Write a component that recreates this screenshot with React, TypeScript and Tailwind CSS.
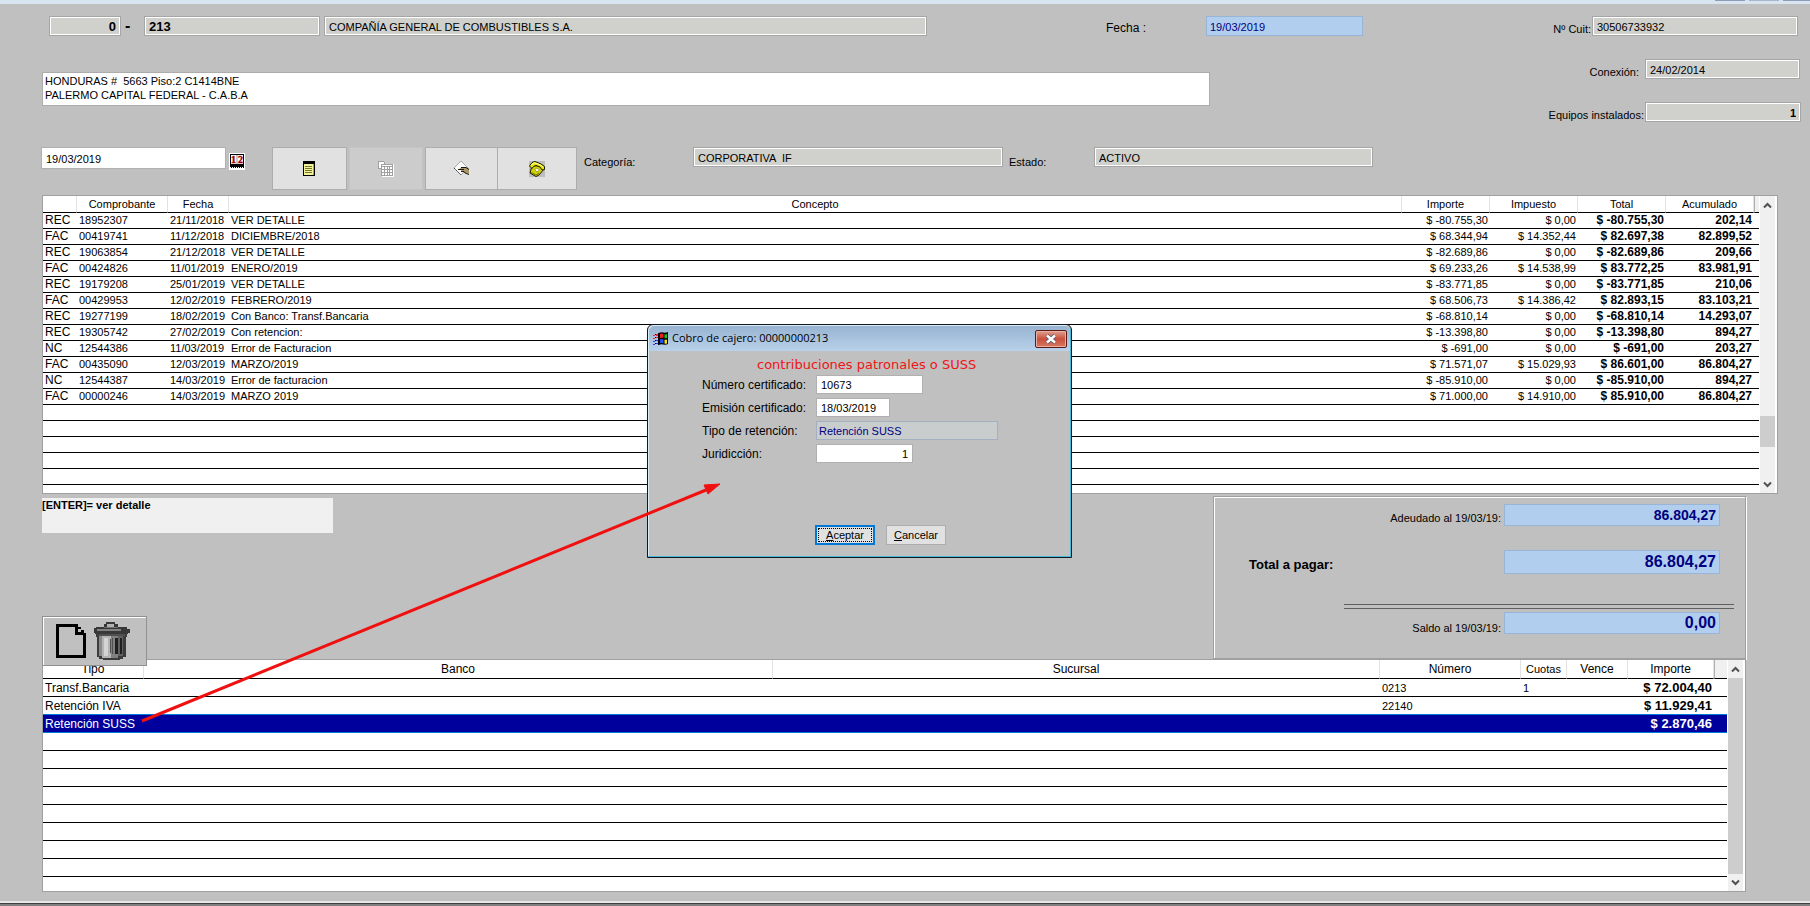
import type { InputHTMLAttributes, ReactNode } from 'react';
import clsx from 'clsx';

const FIELD_STYLES = {
  readonly: 'h-5 border border-[#a6a6a6] bg-[#d0d0cc] px-1 pt-px shadow-[inset_0_0_0_1px_#fff] outline-none',
  highlight: 'border border-[#98b4d6] bg-[#b2ceee] px-[3px] text-[#000080] outline-none',
  editable: 'border border-[#b0b0b0] bg-white px-1 pt-px outline-none',
};

const MOVEMENTS = [
  ['REC', '18952307', '21/11/2018', 'VER DETALLE', '$ -80.755,30', '$ 0,00', '$ -80.755,30', '202,14'],
  ['FAC', '00419741', '11/12/2018', 'DICIEMBRE/2018', '$ 68.344,94', '$ 14.352,44', '$ 82.697,38', '82.899,52'],
  ['REC', '19063854', '21/12/2018', 'VER DETALLE', '$ -82.689,86', '$ 0,00', '$ -82.689,86', '209,66'],
  ['FAC', '00424826', '11/01/2019', 'ENERO/2019', '$ 69.233,26', '$ 14.538,99', '$ 83.772,25', '83.981,91'],
  ['REC', '19179208', '25/01/2019', 'VER DETALLE', '$ -83.771,85', '$ 0,00', '$ -83.771,85', '210,06'],
  ['FAC', '00429953', '12/02/2019', 'FEBRERO/2019', '$ 68.506,73', '$ 14.386,42', '$ 82.893,15', '83.103,21'],
  ['REC', '19277199', '18/02/2019', 'Con Banco: Transf.Bancaria', '$ -68.810,14', '$ 0,00', '$ -68.810,14', '14.293,07'],
  ['REC', '19305742', '27/02/2019', 'Con retencion:', '$ -13.398,80', '$ 0,00', '$ -13.398,80', '894,27'],
  ['NC', '12544386', '11/03/2019', 'Error de Facturacion', '$ -691,00', '$ 0,00', '$ -691,00', '203,27'],
  ['FAC', '00435090', '12/03/2019', 'MARZO/2019', '$ 71.571,07', '$ 15.029,93', '$ 86.601,00', '86.804,27'],
  ['NC', '12544387', '14/03/2019', 'Error de facturacion', '$ -85.910,00', '$ 0,00', '$ -85.910,00', '894,27'],
  ['FAC', '00000246', '14/03/2019', 'MARZO 2019', '$ 71.000,00', '$ 14.910,00', '$ 85.910,00', '86.804,27'],
];

const PAYMENTS = [
  { tipo: 'Transf.Bancaria', numero: '0213', cuotas: '1', importe: '$ 72.004,40' },
  { tipo: 'Retención IVA', numero: '22140', cuotas: '', importe: '$ 11.929,41' },
  { tipo: 'Retención SUSS', numero: '', cuotas: '', importe: '$ 2.870,46', selected: true },
];

const EMPTY_MOVEMENTS = [0, 1, 2, 3, 4];
const EMPTY_PAYMENTS = [0, 1, 2, 3, 4, 5, 6, 7];

type FieldProps = InputHTMLAttributes<HTMLInputElement> & { variant: keyof typeof FIELD_STYLES };

function Field({ variant, className, ...props }: FieldProps) {
  return (
    <input
      type="text"
      readOnly={variant !== 'editable'}
      className={clsx(FIELD_STYLES[variant], className)}
      {...props}
    />
  );
}

function Chevron({ down = false }: { down?: boolean }) {
  return (
    <svg width="9" height="7" viewBox="0 0 9 7" className={down ? 'rotate-180' : ''} fill="none">
      <path d="M1 5.5 4.5 2 8 5.5" stroke="#505050" strokeWidth="2" />
    </svg>
  );
}

function ScrollBar({ children }: { children: ReactNode }) {
  return (
    <div className="flex w-[18px] shrink-0 flex-col border-r-2 border-l border-white bg-[#f0f0f0]">
      <button type="button" aria-label="Subir" className="flex h-[18px] items-center justify-center">
        <Chevron />
      </button>
      <div className="flex flex-1 flex-col">{children}</div>
      <button type="button" aria-label="Bajar" className="flex h-[17px] items-center justify-center">
        <Chevron down />
      </button>
    </div>
  );
}

function CalendarIcon() {
  return (
    <svg width="16" height="17" viewBox="0 0 16 17">
      <path d="M0 0h16v17H0z" fill="#fff" />
      <path d="M1 1h14v14H1z" fill="#000" />
      <path d="M2 2h5v9H2zM9 2h5v9H9z" fill="#fff" />
      <path d="M7 2h2v9H7z" fill="#c8c8c8" />
      <path d="M1 14.500h14" stroke="#fff" strokeWidth="1" strokeDasharray="1 1" />
      <text x="2" y="10" fontSize="10" fontWeight="700" fontFamily="Liberation Serif, serif" fill="#a00000" stroke="#a00000" strokeWidth="0.400">1</text>
      <text x="9" y="10" fontSize="10" fontWeight="700" fontFamily="Liberation Serif, serif" fill="#a00000" stroke="#a00000" strokeWidth="0.400">2</text>
    </svg>
  );
}

function NotepadIcon() {
  return (
    <svg width="12" height="15" viewBox="0 0 12 15" shapeRendering="crispEdges">
      <path d="M0 0h12v15H0z" fill="#000" />
      <path d="M1 3h9v11H1z" fill="#f4f49c" />
      <path d="M2 5h7v1H2zM2 7h7v1H2zM2 9h7v1H2zM2 11h7v1H2z" fill="#74742c" />
      <path d="M10 3h1v11h-1z" fill="#40c8c0" />
    </svg>
  );
}

function SheetsIcon() {
  return (
    <svg width="16" height="16" viewBox="0 0 16 16" shapeRendering="crispEdges">
      <path d="M1 1h6v2h8v13H4V8H1z" fill="#fff" />
      <path d="M0 0h6v1H1v6h2v1H0zM6 1h1v2H6zM3 3h12v12H3z" fill="#a0a0a0" />
      <path d="M4 4h10v1H4zM4 6h2v2H4zM7 6h2v2H7zM10 6h1v2h-1zM12 6h2v2h-2zM4 9h2v2H4zM7 9h2v2H7zM10 9h1v2h-1zM12 9h2v2h-2zM4 12h2v2H4zM7 12h2v2H7zM10 12h1v2h-1zM12 12h2v2h-2zM2 2h3v1H2z" fill="#fff" />
      <path d="M15 3h1v13H4v-1h11z" fill="#fff" />
    </svg>
  );
}

function WriteIcon() {
  return (
    <svg width="17" height="17" viewBox="0 0 17 17">
      <path d="M8 1 15 8 8 15 1 8z" fill="#fafafa" stroke="#a8a8a8" strokeWidth="1" />
      <path d="M1 8 8 15" stroke="#404040" strokeWidth="1" strokeDasharray="2 1" />
      <path d="M6 9 9 7h4l3 2v5l-3-1-2 0-2-2z" fill="#a89868" />
      <path d="M5 9.500h6M8 7.500h5l3 2M8 11.500h3l1 1.500 4 1.500" fill="none" stroke="#201810" strokeWidth="1" />
    </svg>
  );
}

function PhoneIcon() {
  return (
    <svg width="16" height="16" viewBox="0 0 16 16">
      <path d="M0 0h16v16H0z" fill="#bdbdbd" />
      <path d="M3 5 12 4.500 15 8l-5 6-3 1.500L1 12z" fill="#d4d400" stroke="#181800" strokeWidth="1" />
      <path d="M.5 5 3 1.500 6 .5l6 2.500 3.500 2.500v3L13 9l-2-3-4-1.500-2.500 1L3 7.500z" fill="#e8e800" stroke="#181800" strokeWidth="1" />
      <path d="M2 4.500 4 2.200 6.500 2 12 4.200 14 6" fill="none" stroke="#ffffb0" strokeWidth="1" />
      <path d="M5.500 8.500 8 7l2.500 2L8 11z" fill="#fffff0" stroke="#505000" strokeWidth="0.500" />
      <path d="M2.500 11.500 7 14l3-2" fill="none" stroke="#707000" strokeWidth="1" />
    </svg>
  );
}

function NewPageIcon() {
  return (
    <svg width="30" height="34" viewBox="0 0 30 34" shapeRendering="crispEdges">
      <path d="M0 0h22v3h3v3h3v3h2v25H0zM3 3v28h24V11h-8V3z" fill="#000" fillRule="evenodd" />
      <path d="M22 5h3v3h-3z" fill="#c0c0c0" />
    </svg>
  );
}

function TrashIcon() {
  return (
    <svg width="36" height="38" viewBox="0 0 36 38" shapeRendering="crispEdges">
      <path d="M12 0h9v2h3v3h9v2h3v4h-2v1H1v-1H0V6h2V5h8V2h2z" fill="#383838" />
      <path d="M13 2h7v3h-7z" fill="#b0b0b0" />
      <path d="M3 7h24v2H3z" fill="#808080" />
      <path d="M10 5h14v1H10z" fill="#707070" />
      <path d="M2 12h31v3h-1v20h-3v2h-3v1H9v-1H5v-2H3V15H2z" fill="#3c3c3c" />
      <path d="M5 14h3v20H5z" fill="#8a8a8a" />
      <path d="M8 14h9v22H8z" fill="#b4b4b4" />
      <path d="M10 16h4v18h-4z" fill="#d4d4d4" />
      <path d="M17 14h7v22h-7z" fill="#808080" />
      <path d="M24 14h5v20h-5z" fill="#606060" />
      <path d="M16 17h1v14h-1zM18 16h1v16h-1z" fill="#505050" />
      <path d="M21 16h3v16h-3zM26 16h2v16h-2z" fill="#202020" />
      <path d="M5 12h26v2H5z" fill="#505050" />
    </svg>
  );
}

function WindowsLogo() {
  return (
    <svg width="17" height="15" viewBox="0 0 17 15">
      <path d="M7 2c3-2 5 1 9-1v12c-4 2-6-1-9 1z" fill="#000" />
      <path d="M8 3c1.500-1 2.500-.3 3.500 0v4C10.500 6.700 9.500 6.500 8 7.200z" fill="#f02020" />
      <path d="M12.500 3.300c1 .2 1.700.1 2.500-.3v4c-.8.400-1.500.500-2.500.2z" fill="#20c020" />
      <path d="M8 8.500c1.500-.8 2.500-.3 3.500 0v4c-1-.3-2-.8-3.500 0z" fill="#2050f0" />
      <path d="M12.500 8.700c1 .2 1.700.1 2.500-.3v4c-.8.400-1.500.500-2.500.2z" fill="#f0e020" />
      <path d="M4 3h2v2H4zM1 4h2v1H1zM4 6h2v1H4zM1 7h2v1H1z" fill="#e03040" />
      <path d="M4 9h2v1H4zM1 10h2v1H1zM4 12h2v1H4zM1 13h2v1H1z" fill="#3040d0" />
      <path d="M3 3h1v1H3zM3 6h1v1H3zM3 9h1v1H3zM3 12h1v1H3zM6 2h1v12H6z" fill="#000" />
    </svg>
  );
}

function CustomerHeader() {
  return (
    <header className="flex pt-3">
      <div className="flex-1 pl-[42px]">
        <div className="flex items-center">
          <Field variant="readonly" aria-label="Sucursal" defaultValue="0" className="ml-[7px] w-[72px] text-right text-[13px] font-bold" />
          <span className="w-[23px] pl-1 text-base leading-5 font-bold">-</span>
          <Field variant="readonly" aria-label="Cliente" defaultValue="213" className="w-44 text-[13px] font-bold" />
          <Field variant="readonly" aria-label="Razón social" defaultValue="COMPAÑÍA GENERAL DE COMBUSTIBLES S.A." className="ml-1 w-[603px]" />
          <div className="ml-auto flex items-center">
            <label htmlFor="fecha" className="w-[100px] pt-1 text-xs">Fecha :</label>
            <Field variant="highlight" id="fecha" defaultValue="19/03/2019" className="h-5 w-[157px] pt-px" />
          </div>
        </div>
        <textarea
          readOnly
          aria-label="Domicilio"
          rows={2}
          defaultValue={'HONDURAS #  5663 Piso:2 C1414BNE\nPALERMO CAPITAL FEDERAL - C.A.B.A'}
          className="mt-9 block h-[34px] w-[1168px] resize-none overflow-hidden border border-[#acacac] bg-white px-[2px] py-px leading-[14px] outline-none"
        />
      </div>
      <div className="flex w-[447px] flex-col items-end gap-[23px]">
        <div className="flex items-end gap-px pr-[12px]">
          <label htmlFor="cuit" className="leading-[14px]">Nº Cuit:</label>
          <Field variant="readonly" id="cuit" defaultValue="30506733932" className="w-[206px]" />
        </div>
        <div className="flex items-end gap-[6px] pr-[10px]">
          <label htmlFor="conexion" className="leading-[14px]">Conexión:</label>
          <Field variant="readonly" id="conexion" defaultValue="24/02/2014" className="w-[155px]" />
        </div>
        <div className="flex items-end gap-px pr-[9px]">
          <label htmlFor="equipos" className="leading-[14px]">Equipos instalados:</label>
          <Field variant="readonly" id="equipos" defaultValue="1" className="w-[156px] text-right font-bold" />
        </div>
      </div>
    </header>
  );
}

function Toolbar() {
  const button = 'flex h-[43px] items-center justify-center border border-[#adadad] bg-[#e1e1e1]';

  return (
    <div className="mt-[25px] flex items-start pl-[41px]">
      <Field variant="editable" aria-label="Fecha de cálculo" defaultValue="19/03/2019" className="h-[22px] w-[185px]" />
      <button type="button" aria-label="Calendario" className="mt-[6px] ml-[3px]">
        <CalendarIcon />
      </button>
      <div className="ml-[27px] flex">
        <button type="button" aria-label="Detalle" className={clsx(button, 'w-[75px] pr-[2px]')}>
          <NotepadIcon />
        </button>
        <button type="button" aria-label="Planilla" disabled className="mx-[2px] flex h-[43px] w-[74px] items-center justify-center border border-[#c4c4c4] bg-[#cccccc]">
          <SheetsIcon />
        </button>
        <button type="button" aria-label="Notas" className={clsx(button, 'w-[73px]')}>
          <WriteIcon />
        </button>
        <button type="button" aria-label="Contactos" className={clsx(button, '-ml-px w-20')}>
          <PhoneIcon />
        </button>
      </div>
      <label htmlFor="categoria" className="ml-[7px] w-[109px] pt-2 leading-[14px]">Categoría:</label>
      <Field variant="readonly" id="categoria" defaultValue="CORPORATIVA  IF" className="w-[310px]" />
      <label htmlFor="estado" className="ml-[6px] w-[85px] pt-2 leading-[14px]">Estado:</label>
      <Field variant="readonly" id="estado" defaultValue="ACTIVO" className="w-[279px]" />
    </div>
  );
}

function MovementsTable() {
  const head = 'h-[17px] border-r border-b border-r-[#e2e2e2] border-b-black text-center font-normal';
  const cell = 'h-4 border-b border-black px-[2px] whitespace-nowrap';

  return (
    <div className="mr-8 ml-[42px] flex border border-[#a0a0a0] bg-white">
      <div className="flex-1 pb-2">
        <table className="w-full table-fixed border-separate border-spacing-0 leading-[15px]">
          <colgroup>
            <col className="w-[34px]" />
            <col className="w-[91px]" />
            <col className="w-[61px]" />
            <col />
            <col className="w-[88px]" />
            <col className="w-[88px]" />
            <col className="w-[88px]" />
            <col className="w-[88px]" />
            <col className="w-[5px]" />
          </colgroup>
          <thead>
            <tr>
              <th className={head}></th>
              <th className={head}>Comprobante</th>
              <th className={head}>Fecha</th>
              <th className={head}>Concepto</th>
              <th className={head}>Importe</th>
              <th className={head}>Impuesto</th>
              <th className={head}>Total</th>
              <th className={head}>Acumulado</th>
              <th className="border-b border-l border-b-black border-l-[#b0b0b0] bg-[#f0f0f0]"></th>
            </tr>
          </thead>
          <tbody>
            {MOVEMENTS.map(([tipo, comprobante, fecha, concepto, importe, impuesto, total, acumulado]) => (
              <tr key={comprobante}>
                <td className={clsx(cell, 'text-xs leading-[15px]')}>{tipo}</td>
                <td className={cell}>{comprobante}</td>
                <td className={cell}>{fecha}</td>
                <td className={cell}>{concepto}</td>
                <td className={clsx(cell, 'text-right')}>{importe}</td>
                <td className={clsx(cell, 'text-right')}>{impuesto}</td>
                <td className={clsx(cell, 'text-right text-xs leading-[15px] font-bold')}>{total}</td>
                <td className={clsx(cell, 'text-right text-xs leading-[15px] font-bold')}>{acumulado}</td>
                <td className="border-b border-black"></td>
              </tr>
            ))}
            {EMPTY_MOVEMENTS.map((row) => (
              <tr key={row}>
                <td colSpan={9} className={cell}></td>
              </tr>
            ))}
          </tbody>
        </table>
      </div>
      <ScrollBar>
        <div className="flex-[203]" />
        <div className="flex-[31] bg-[#cdcdcd]" />
        <div className="flex-[29]" />
      </ScrollBar>
    </div>
  );
}

function Totals() {
  return (
    <section className="mt-[2px] mr-16 h-[163px] w-[533px] border border-[#a0a0a0] shadow-[inset_1px_1px_0_#fff,1px_1px_0_#fff]">
      <div className="mt-[7px] flex items-end justify-end gap-[3px] pr-[25px]">
        <label htmlFor="adeudado" className="leading-4">Adeudado al 19/03/19:</label>
        <Field variant="highlight" id="adeudado" defaultValue="86.804,27" className="h-[22px] w-[216px] text-right text-sm font-bold" />
      </div>
      <div className="mt-[23px] flex items-center justify-between pr-[25px] pl-[35px]">
        <label htmlFor="total" className="pt-[6px] text-[13px] font-bold">Total a pagar:</label>
        <Field variant="highlight" id="total" defaultValue="86.804,27" className="h-6 w-[216px] text-right text-base font-bold" />
      </div>
      <div className="mt-[29px] mr-[11px] ml-[130px] h-[5px] border-y border-[#606060]" />
      <div className="mt-[3px] flex items-end justify-end gap-[3px] pr-[25px]">
        <label htmlFor="saldo" className="leading-3">Saldo al 19/03/19:</label>
        <Field variant="highlight" id="saldo" defaultValue="0,00" className="h-[22px] w-[216px] text-right text-base font-bold" />
      </div>
    </section>
  );
}

function PaymentsTable() {
  const head = 'h-[19px] border-r border-b border-r-[#e2e2e2] border-b-black text-center text-xs leading-4 font-normal';
  const cell = 'h-[18px] border-b px-[2px] whitespace-nowrap';

  return (
    <div className="mr-16 ml-[42px] flex border border-[#a0a0a0] bg-white">
      <div className="flex-1 pb-[14px]">
        <table className="w-full table-fixed border-separate border-spacing-0 leading-4">
          <colgroup>
            <col className="w-[101px]" />
            <col />
            <col className="w-[607px]" />
            <col className="w-[141px]" />
            <col className="w-[46px]" />
            <col className="w-[61px]" />
            <col className="w-[86px]" />
            <col className="w-[13px]" />
          </colgroup>
          <thead>
            <tr>
              <th className={head}>Tipo</th>
              <th className={head}>Banco</th>
              <th className={head}>Sucursal</th>
              <th className={head}>Número</th>
              <th className="border-r border-b border-r-[#e2e2e2] border-b-black text-center font-normal">Cuotas</th>
              <th className={head}>Vence</th>
              <th className={head}>Importe</th>
              <th className="border-b border-l border-b-black border-l-[#b0b0b0] bg-[#f0f0f0]"></th>
            </tr>
          </thead>
          <tbody>
            {PAYMENTS.map((row) => {
              const tone = row.selected ? 'border-[#0078d7] bg-[#00009c] text-white shadow-[0_-1px_0_#0078d7]' : 'border-black';
              return (
                <tr key={row.tipo}>
                  <td className={clsx(cell, tone, 'text-xs leading-4')}>{row.tipo}</td>
                  <td className={clsx(cell, tone)}></td>
                  <td className={clsx(cell, tone)}></td>
                  <td className={clsx(cell, tone)}>{row.numero}</td>
                  <td className={clsx(cell, tone)}>{row.cuotas}</td>
                  <td className={clsx(cell, tone)}></td>
                  <td className={clsx(cell, tone, 'text-right text-[13px] leading-4 font-bold')}>{row.importe}</td>
                  <td className={clsx(cell, tone)}></td>
                </tr>
              );
            })}
            {EMPTY_PAYMENTS.map((row) => (
              <tr key={row}>
                <td colSpan={8} className={clsx(cell, 'border-black')}></td>
              </tr>
            ))}
          </tbody>
        </table>
      </div>
      <ScrollBar>
        <div className="flex-1 bg-[#cdcdcd]" />
      </ScrollBar>
    </div>
  );
}

function DialogRow({ id, label, children }: { id: string; label: string; children: ReactNode }) {
  return (
    <div className="flex items-center">
      <label htmlFor={id} className="w-[114px] text-xs">{label}</label>
      {children}
    </div>
  );
}

function WithholdingDialog() {
  return (
    <div
      role="dialog"
      aria-labelledby="dialog-title"
      className="absolute top-[324px] left-[647px] h-[234px] w-[425px] rounded-t-md border border-[#101820] bg-[#c0c0c0] shadow-[inset_-1px_-1px_0_#48b8d8,inset_1px_1px_0_#d8ecf8]"
    >
      <div className="mx-px mt-px flex h-[25px] items-center rounded-t-md bg-linear-to-b from-[#98b4d2] to-[#b9d1ea] px-[3px]">
        <WindowsLogo />
        <h2 id="dialog-title" className="pl-[3px] font-['Open_Sans',sans-serif] text-[11px]">
          Cobro de cajero: 00000000213
        </h2>
        <button
          type="button"
          aria-label="Cerrar"
          className="ml-auto flex h-[18px] w-8 items-center justify-center rounded-[2px] border border-[#5c1a14] bg-linear-to-b from-[#e0a090] via-[#c8503c] to-[#d87860] shadow-[inset_0_0_0_1px_#e8b0a4]"
        >
          <svg width="12" height="10" viewBox="0 0 12 10" fill="none">
            <path d="M2 1.500 10 8.500M10 1.500 2 8.500" stroke="#505868" strokeWidth="4" />
            <path d="M2 1.500 10 8.500M10 1.500 2 8.500" stroke="#fff" strokeWidth="2.500" />
          </svg>
        </button>
      </div>
      <p className="pt-[5px] pl-[109px] font-['DejaVu_Sans',sans-serif] text-[13px] leading-[18px] text-[#f01414]">
        contribuciones patronales o SUSS
      </p>
      <form className="flex flex-col gap-1 pt-px pl-[54px]" onSubmit={(e) => e.preventDefault()}>
        <DialogRow id="numero" label="Número certificado:">
          <Field variant="editable" id="numero" defaultValue="10673" className="h-[19px] w-[107px]" />
        </DialogRow>
        <DialogRow id="emision" label="Emisión certificado:">
          <Field variant="editable" id="emision" defaultValue="18/03/2019" className="h-[19px] w-[74px]" />
        </DialogRow>
        <DialogRow id="tipo" label="Tipo de retención:">
          <input id="tipo" readOnly defaultValue="Retención SUSS" className="h-[19px] w-[182px] border border-[#a4b0c0] bg-[#cacdce] px-[2px] text-[#000080] outline-none" />
        </DialogRow>
        <DialogRow id="juridiccion" label="Juridicción:">
          <Field variant="editable" id="juridiccion" defaultValue="1" className="h-[19px] w-[97px] text-right" />
        </DialogRow>
        <div className="mt-[58px] ml-[113px] flex gap-[11px]">
          <button type="submit" className="h-5 w-[60px] border-2 border-[#0078d7] bg-[#e1e1e1] p-px">
            <span className="block border border-dotted border-black leading-3">
              <u>A</u>ceptar
            </span>
          </button>
          <button type="button" className="h-5 w-[60px] border border-[#adadad] bg-[#e1e1e1]">
            <u>C</u>ancelar
          </button>
        </div>
      </form>
    </div>
  );
}

// Red callout going from the selected payment to the dialog
function Arrow() {
  return (
    <svg className="pointer-events-none absolute top-[480px] left-[140px]" width="584" height="245" viewBox="0 0 584 245">
      <path d="M2 241 566 10" stroke="#f01010" strokeWidth="3" />
      <path d="M580 4 564 5 568 14z" fill="#f01010" stroke="#f01010" strokeWidth="1" />
    </svg>
  );
}

export default function App() {
  return (
    <div className="relative flex min-h-screen flex-col overflow-hidden bg-[#c0c0c0] font-['Liberation_Sans',Arial,sans-serif] text-[11px] text-black">
      <div className="flex h-1 items-start justify-end gap-1 bg-[#d9e4f1]">
        <div className="h-px w-[30px] bg-[#8c9cb8]" />
        <div className="h-px w-[30px] bg-[#a8b8cc]" />
        <div className="h-px w-[27px] bg-[#8c9cb8]" />
      </div>
      <CustomerHeader />
      <Toolbar />
      <div className="mt-[5px]">
        <MovementsTable />
      </div>
      <div className="flex justify-between">
        <div className="flex flex-col justify-between pl-[42px]">
          <p className="mt-1 h-[35px] w-[291px] bg-[#f0f0f0] leading-[15px] font-bold">[ENTER]= ver detalle</p>
          <div className="relative -mb-[7px] flex h-[50px] w-[105px] items-start gap-2 border border-[#909090] bg-[#c0c0c0] pt-[5px] pl-[13px] shadow-[inset_1px_1px_0_#fff]">
            <button type="button" aria-label="Nuevo" className="pt-[2px]">
              <NewPageIcon />
            </button>
            <button type="button" aria-label="Eliminar">
              <TrashIcon />
            </button>
          </div>
        </div>
        <Totals />
      </div>
      <PaymentsTable />
      <div className="mt-auto h-[5px] border-t-2 border-[#e8e8e8] bg-[#808080] shadow-[inset_0_1px_0_#404040]" />
      <WithholdingDialog />
      <Arrow />
    </div>
  );
}
